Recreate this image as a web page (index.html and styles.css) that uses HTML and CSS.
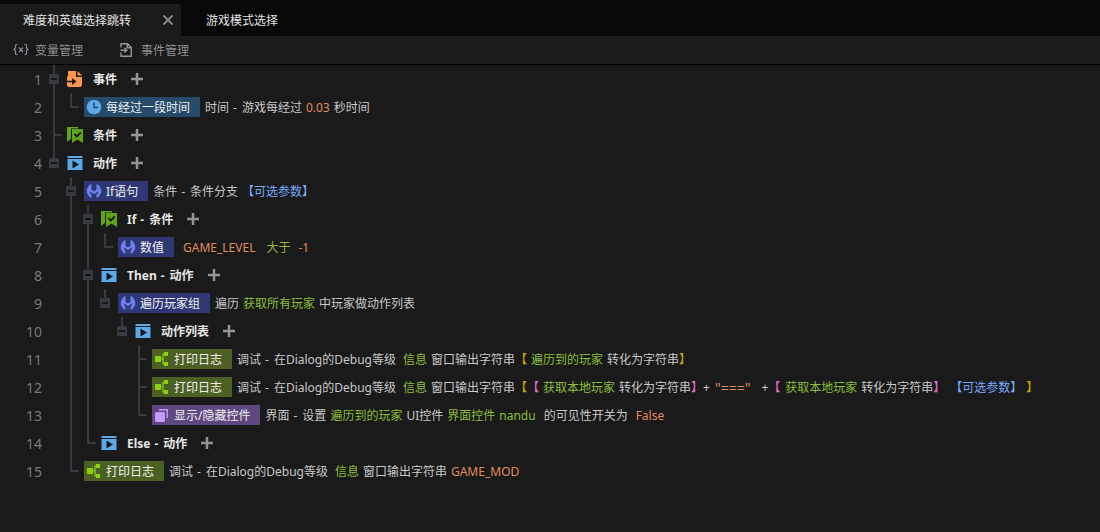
FILE: index.html
```html
<!DOCTYPE html>
<html lang="zh-CN">
<head>
<meta charset="utf-8">
<title>难度和英雄选择跳转</title>
<link rel="stylesheet" href="styles.css">
</head>
<body>
<svg class="defs" aria-hidden="true">
  <symbol id="event" viewBox="0 0 16 16"><path fill="#ff9650" d="M1 0H9V6H15V14.500L13.500 16H1.500L0 14.500V6L1 5Z"/><path fill="#ff9650" d="M10.500 0 15 4.500H10.500Z"/><path fill="#1a1a1a" d="M0 9.800H5V7L9.500 10.500 5 14V11.300H0Z"/></symbol>
  <symbol id="cond" viewBox="0 0 16 16"><path fill="#5fa51b" d="M0 0H11V1.500H4V12L0 15Z"/><path fill="#5fa51b" d="M5 2H16V16L10.500 12.500 5 16Z"/><path fill="none" stroke="#1a1a1a" stroke-width="1.800" d="M7.300 7 9.800 9.500 13.800 5.500"/></symbol>
  <symbol id="action" viewBox="0 0 16 16"><path fill="#5da8e8" d="M0.500 1H15.500V3H0.500ZM0.500 4H15.500V15H0.500Z"/><path fill="#1a1a1a" d="M5.500 5.500 12 9.500 5.500 13.500Z"/></symbol>
  <symbol id="clock" viewBox="0 0 16 16"><circle cx="8" cy="8" r="7.300" fill="#5da8e8"/><path fill="none" stroke="#264a6a" stroke-width="1.600" d="M8 3.500V8.500H12"/></symbol>
  <symbol id="wrench" viewBox="0 0 16 16"><path fill="#6e80f0" d="M5.500 1V6.500L8 8.500 10.500 6.500V1L13 2.200 15.200 6.500V9.500L13 13.500 10.500 15V12L12.300 9.500 11.500 8.500 9 10.800H7L4.500 8.500 3.700 9.500 5.500 12V15L3 13.500 0.800 9.500V6.500L3 2.200Z"/></symbol>
  <symbol id="nodes" viewBox="0 0 16 16"><path fill="#8cd10f" d="M1 5H7V11H1ZM10 1H14V5H10ZM10 11H14V15H10Z"/><path fill="none" stroke="#8cd10f" stroke-width="1.200" d="M6 8H9V3H11M9 8V13H11"/></symbol>
  <symbol id="copy" viewBox="0 0 16 16"><rect x="1" y="5" width="10" height="10" rx="1.500" fill="#c49bfc"/><path fill="#c49bfc" d="M5 2H13Q14 2 14 3V11H12.500V3.500H5Z"/></symbol>
  <symbol id="plus" viewBox="0 0 12 12"><path stroke="#949494" stroke-width="2.500" d="M0 6H12M6 0V12"/></symbol>
</svg>

<nav class="tabs">
  <div class="tab active"><button type="button" class="name">难度和英雄选择跳转</button><button type="button" class="close" aria-label="关闭"><svg width="10" height="10" viewBox="0 0 10 10"><path stroke="#949494" stroke-width="1.800" d="M0.500 0.500 9.500 9.500M9.500 0.500 0.500 9.500"/></svg></button></div>
  <div class="tab"><button type="button" class="name">游戏模式选择</button></div>
</nav>
<div class="toolbar">
  <button type="button"><svg width="16" height="14" viewBox="0 0 16 14" fill="none" stroke="#8a8a9c" stroke-width="1.200"><path d="M4.500 1.500H3.300Q2.500 1.500 2.500 2.500V5L1 6.500 2.500 8V10.500Q2.500 11.500 3.300 11.500H4.500M11.500 1.500H12.700Q13.500 1.500 13.500 2.500V5L15 6.500 13.500 8V10.500Q13.500 11.500 12.700 11.500H11.500M6 4.500 10 9M10 4.500 6 9"/></svg><span>变量管理</span></button>
  <button type="button"><svg width="16" height="16" viewBox="0 0 16 16" fill="none" stroke="#949494" stroke-width="1.400"><path d="M2 5.500V1.700H8.500L12.300 5.500V14.300H2V10.500M8.200 2V5.700H12M1.500 8.200H7.500M5.300 5.800 7.800 8.200 5.300 10.600"/></svg><span>事件管理</span></button>
</div>

<main class="code">
  <div class="row"><span class="num">1</span><i class="g v"><button type="button" aria-label="折叠"></button></i><svg class="icon"><use href="#event"/></svg><b>事件</b><button type="button" class="add" aria-label="添加事件"><svg><use href="#plus"/></svg></button></div>
  <div class="row"><span class="num">2</span><i class="g v"></i><i class="g corner"></i><span class="tag blue"><svg><use href="#clock"/></svg>每经过一段时间</span><p><span>时间</span><span class="dash">-</span><span>游戏每经过</span><span class="o">0.03</span><span>秒时间</span></p></div>
  <div class="row"><span class="num">3</span><i class="g tee"></i><svg class="icon"><use href="#cond"/></svg><b>条件</b><button type="button" class="add" aria-label="添加条件"><svg><use href="#plus"/></svg></button></div>
  <div class="row"><span class="num">4</span><i class="g end"><button type="button" aria-label="折叠"></button></i><svg class="icon"><use href="#action"/></svg><b>动作</b><button type="button" class="add" aria-label="添加动作"><svg><use href="#plus"/></svg></button></div>
  <div class="row"><span class="num">5</span><i class="g"></i><i class="g v"><button type="button" aria-label="折叠"></button></i><span class="tag indigo"><svg><use href="#wrench"/></svg>If语句</span><p><span>条件</span><span class="dash">-</span><span>条件分支</span><span class="b">【可选参数】</span></p></div>
  <div class="row"><span class="num">6</span><i class="g"></i><i class="g v"></i><i class="g v"><button type="button" aria-label="折叠"></button></i><svg class="icon"><use href="#cond"/></svg><b><span>If</span><span class="dash">-</span><span>条件</span></b><button type="button" class="add" aria-label="添加条件"><svg><use href="#plus"/></svg></button></div>
  <div class="row"><span class="num">7</span><i class="g"></i><i class="g v"></i><i class="g v"></i><i class="g corner"></i><span class="tag indigo"><svg><use href="#wrench"/></svg>数值</span><p class="lead"><span class="o wider">GAME_LEVEL</span><span class="n wide">大于</span><span class="o">-1</span></p></div>
  <div class="row"><span class="num">8</span><i class="g"></i><i class="g v"></i><i class="g v"><button type="button" aria-label="折叠"></button></i><svg class="icon"><use href="#action"/></svg><b><span>Then</span><span class="dash">-</span><span>动作</span></b><button type="button" class="add" aria-label="添加动作"><svg><use href="#plus"/></svg></button></div>
  <div class="row"><span class="num">9</span><i class="g"></i><i class="g v"></i><i class="g v"></i><i class="g end"><button type="button" aria-label="折叠"></button></i><span class="tag indigo"><svg><use href="#wrench"/></svg>遍历玩家组</span><p><span>遍历</span><span class="n">获取所有玩家</span><span>中玩家做动作列表</span></p></div>
  <div class="row"><span class="num">10</span><i class="g"></i><i class="g v"></i><i class="g v"></i><i class="g"></i><i class="g end"><button type="button" aria-label="折叠"></button></i><svg class="icon"><use href="#action"/></svg><b>动作列表</b><button type="button" class="add" aria-label="添加动作"><svg><use href="#plus"/></svg></button></div>
  <div class="row"><span class="num">11</span><i class="g"></i><i class="g v"></i><i class="g v"></i><i class="g"></i><i class="g"></i><i class="g tee"></i><span class="tag green"><svg><use href="#nodes"/></svg>打印日志</span><p><span>调试</span><span class="dash">-</span><span class="msg">在Dialog的Debug等级</span><span class="n">信息</span><span>窗口输出字符串<em class="y">【</em></span><span class="n">遍历到的玩家</span><span>转化为字符串<em class="y">】</em></span></p></div>
  <div class="row"><span class="num">12</span><i class="g"></i><i class="g v"></i><i class="g v"></i><i class="g"></i><i class="g"></i><i class="g tee"></i><span class="tag green"><svg><use href="#nodes"/></svg>打印日志</span><p><span>调试</span><span class="dash">-</span><span class="msg">在Dialog的Debug等级</span><span class="n">信息</span><span>窗口输出字符串<em class="y">【</em><em class="k">【</em></span><span class="n">获取本地玩家</span><span class="dash">转化为字符串<em class="k">】</em>+</span><span class="o str wider">"==="</span><span class="dash">+<em class="k">【</em></span><span class="n">获取本地玩家</span><span class="dash">转化为字符串<em class="k">】</em></span><span class="b">【可选参数】</span><span class="y">】</span></p></div>
  <div class="row"><span class="num">13</span><i class="g"></i><i class="g v"></i><i class="g v"></i><i class="g"></i><i class="g"></i><i class="g corner"></i><span class="tag purple"><svg><use href="#copy"/></svg>显示/隐藏控件</span><p><span>界面</span><span class="dash">-</span><span>设置</span><span class="n">遍历到的玩家</span><span>UI控件</span><span class="n">界面控件</span><span class="n wide">nandu</span><span class="wide">的可见性开关为</span><span class="o">False</span></p></div>
  <div class="row"><span class="num">14</span><i class="g"></i><i class="g v"></i><i class="g corner"></i><svg class="icon"><use href="#action"/></svg><b><span>Else</span><span class="dash">-</span><span>动作</span></b><button type="button" class="add" aria-label="添加动作"><svg><use href="#plus"/></svg></button></div>
  <div class="row"><span class="num">15</span><i class="g"></i><i class="g corner"></i><span class="tag green"><svg><use href="#nodes"/></svg>打印日志</span><p><span>调试</span><span class="dash">-</span><span class="msg">在Dialog的Debug等级</span><span class="n">信息</span><span>窗口输出字符串</span><span class="o">GAME_MOD</span></p></div>
</main>
</body>
</html>
```
FILE: styles.css
```css
* { box-sizing: border-box; }
body {
  margin: 0;
  min-height: 100vh;
  background: #1a1a1a;
  color: #c8c8c8;
  font: 12px/20px "Noto Sans", "Noto Sans CJK SC", sans-serif;
  text-spacing-trim: space-all;
}
button { padding: 0; border: 0; background: none; color: inherit; font: inherit; cursor: pointer; }
svg { display: block; flex: none; }
.defs { position: absolute; width: 0; height: 0; }
em, i { font-style: normal; }

.tabs { display: flex; padding-top: 4px; background: #080808; color: #e4e4e4; }
.tab { display: flex; align-items: center; height: 32px; padding: 0 25px; }
.tab.active { gap: 32px; padding: 0 8px 0 23px; border-radius: 0 4px 0 0; background: #1a1a1a; }
.toolbar { display: flex; gap: 36px; height: 29px; padding-left: 13px; border-bottom: 1px solid #000; color: #8e8e8e; }
.toolbar button { display: flex; align-items: center; gap: 6px; height: 28px; }
.name, .toolbar span, .num, b, p { padding-top: 2px; }

.row { display: flex; align-items: center; height: 28px; white-space: nowrap; }
.num { width: 42px; margin-right: 4px; color: #7c7c7c; font-size: 14px; text-align: right; }
.g { flex: none; width: 17px; height: 28px; padding: 9px 0 0 3px; background-repeat: no-repeat; --line: linear-gradient(#363a42, #363a42); }
.g button { display: grid; place-items: center; width: 10px; height: 10px; background: #363a42; }
.g button::before { content: ""; width: 6px; height: 2px; background: #15161a; }
.v { background-image: var(--line); background-position: 7px 0; background-size: 2px 100%; }
.end { background-image: var(--line); background-position: 7px 0; background-size: 2px 50%; }
.tee { background-image: var(--line), var(--line); background-position: 7px 0, 7px 13px; background-size: 2px 100%, 9px 2px; }
.corner { background-image: var(--line), var(--line); background-position: 7px 0, 7px 13px; background-size: 2px 15px, 9px 2px; }
.icon { width: 16px; height: 16px; margin: 0 10px 0 4px; }
b { display: flex; gap: 4px; color: #e6e6e6; }
.add { margin-left: 14px; }
.add svg { width: 12px; height: 12px; }

.tag { display: flex; align-items: center; gap: 4px; height: 20px; margin-left: 4px; padding: 2px 10px 0 2px; color: #f0f0f0; }
.tag svg { width: 16px; height: 16px; margin-bottom: 2px; }
.blue { background: #264a6a; }
.indigo { background: #2f3775; }
.green { background: #4c6023; }
.purple { background: #5f4780; }

p { display: flex; gap: 4px; margin: 0 0 0 5px; }
p.lead { margin-left: 9px; }
.dash { margin-right: 1px; }
.msg { margin-right: 3px; }
.wide { margin-right: 4px; }
.wider { margin-right: 7px; }
.str { font-size: 14px; }
.o { color: #e08c5a; }
.n { color: #8cbe3c; }
.b { color: #78aaff; }
.y { color: #c8aa00; }
.k { color: #e06ed0; }
```
